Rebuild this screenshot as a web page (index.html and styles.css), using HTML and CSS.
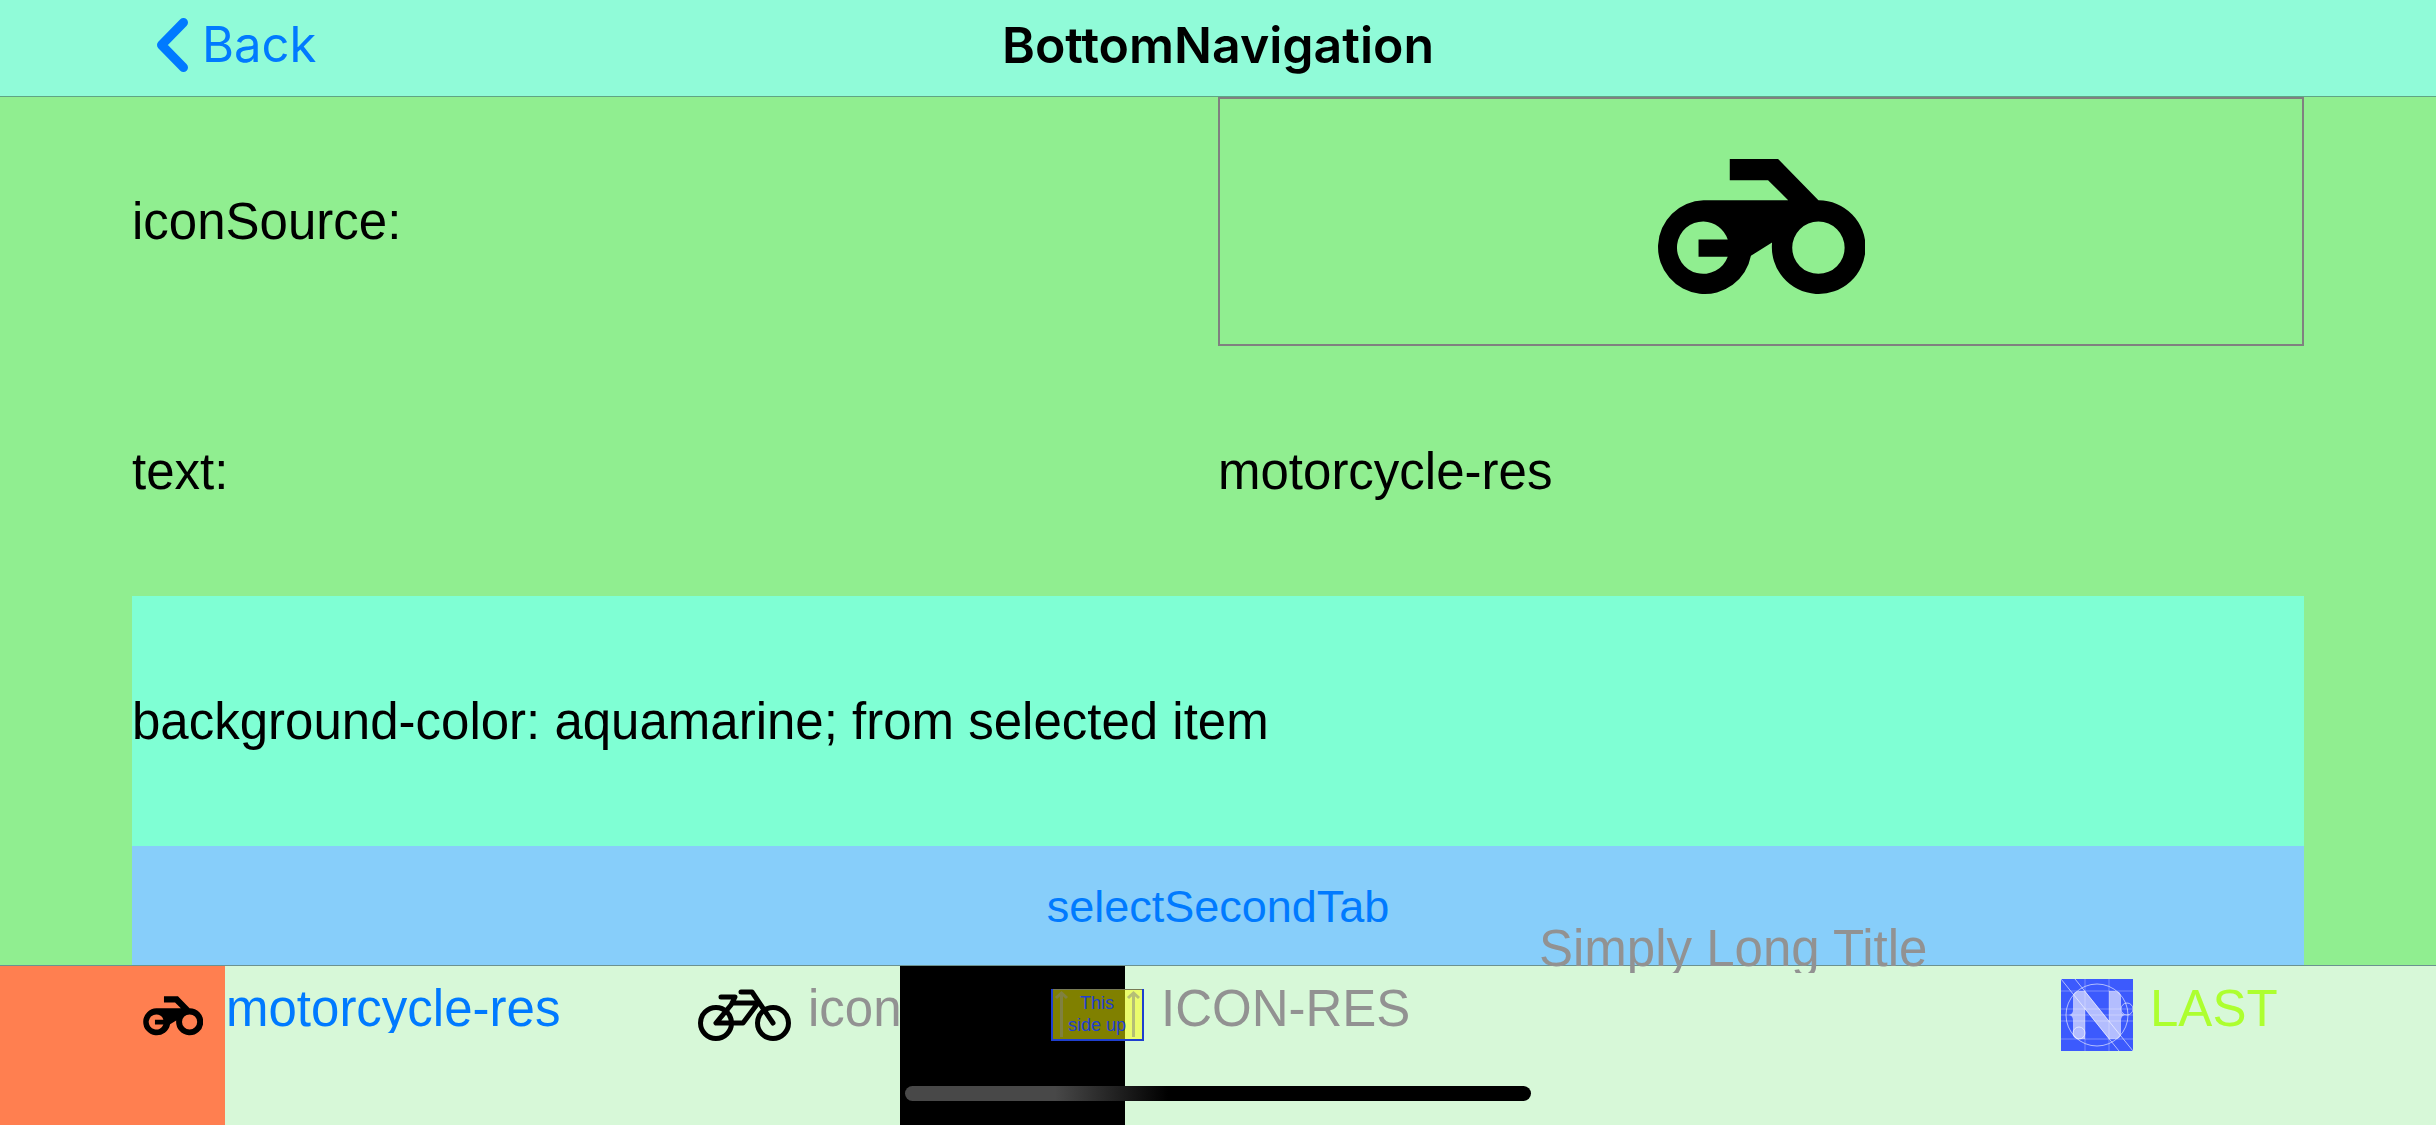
FILE: index.html
```html
<!DOCTYPE html>
<html lang="en">
<head>
<meta charset="utf-8">
<title>BottomNavigation</title>
<link rel="stylesheet" href="styles.css">
</head>
<body>
<header class="action-bar">
  <a class="back" href="#">
    <svg class="chevron" viewBox="0 0 32 54" aria-hidden="true"><path d="M27.5 4.500 5.500 27l22 22.500"/></svg>
    <span>Back</span>
  </a>
  <h1 class="title">BottomNavigation</h1>
</header>

<main class="content">
  <div class="row row-icon">
    <span>iconSource:</span>
    <div class="preview">
      <svg class="preview-icon" viewBox="0 0 206 135" role="img" aria-label="motorcycle"><use href="#moto"/></svg>
    </div>
  </div>
  <div class="row">
    <span>text:</span>
    <span>motorcycle-res</span>
  </div>
  <p class="row selected-color">background-color: aquamarine; from selected item</p>
  <button class="select-tab" type="button">selectSecondTab</button>
</main>

<nav class="tabs">
  <button class="tab tab-moto" type="button">
    <svg class="icon icon-moto" viewBox="0 0 206 135" aria-hidden="true">
      <g id="moto">
        <path fill-rule="evenodd" d="M72 0H120L160 41A46.500 46.500 0 1 1 114 83L93 96A46.500 46.500 0 1 1 46 41H130L110 21H72ZM46 62A26 26 0 1 0 70 97H41V80H70A26 26 0 0 0 46 62ZM160 62A26 26 0 1 0 160 114A26 26 0 1 0 160 62Z"/>
      </g>
    </svg>
    <span class="label">motorcycle-res</span>
  </button>
  <button class="tab tab-icon" type="button">
    <svg class="icon icon-bike" viewBox="0 0 93 52" aria-hidden="true">
      <g fill="none" stroke="#000" stroke-width="5" stroke-linecap="round" stroke-linejoin="round">
        <circle cx="18" cy="34" r="15.500"/><circle cx="75" cy="34" r="15.500"/>
        <path d="M23 8H37L33 16 18 34H45L60 14H34M43 3H54L75 34"/>
      </g>
    </svg>
    <span class="label">icon</span>
  </button>
  <button class="tab tab-sign" type="button">
    <svg class="icon icon-sign" viewBox="0 0 93 52" aria-hidden="true">
      <rect width="93" height="52" fill="#ff0" fill-opacity=".5"/>
      <path d="M0 .5H93" stroke="#777a55"/>
      <path d="M1 0V51H92V0" fill="none" stroke="#1f3fd0" stroke-width="2"/>
      <path d="M10.500 48V4M5 9l5.500-5 5.500 5M82.500 48V4M77 9l5.500-5 5.500 5" fill="none" stroke="#808080" stroke-opacity=".5" stroke-width="3"/>
      <g class="sign-text"><text x="46" y="20">This</text><text x="46" y="42">side up</text></g>
    </svg>
    <span class="label">ICON-RES</span>
  </button>
  <button class="tab tab-long" type="button"><span class="label">Simply Long Title</span></button>
  <button class="tab tab-last" type="button">
    <svg class="icon icon-n" viewBox="0 0 72 72" aria-hidden="true">
      <rect width="72" height="72" fill="#3c5afd"/>
      <path d="M12 18Q12 12 18 12H24L48 42V12H54Q60 12 60 18V31Q60 35 64 36Q60 37 60 41V54Q60 60 54 60H48L24 30V60H18Q12 60 12 54V41Q12 37 8 36Q12 35 12 31Z" fill="#b3bdfe"/>
      <g fill="none" stroke="#fff" stroke-opacity=".3">
        <path d="M0 12H72M0 60H72M0 30H72M0 36H72M0 42H72M24 0V72M48 0V72"/>
      </g>
      <g fill="none" stroke="#fff" stroke-opacity=".6"><path d="M0 0 58 72M14 0 72 72"/><circle cx="36" cy="36" r="31"/><circle cx="18" cy="54" r="6"/><circle cx="66" cy="30" r="6"/></g>
    </svg>
    <span class="label">LAST</span>
  </button>
  <div class="home-indicator"></div>
</nav>
</body>
</html>
```
FILE: styles.css
```css
* { box-sizing: border-box; }

body {
  margin: 0;
  height: 100vh;
  display: flex;
  flex-direction: column;
  background: lightgreen;
  color: #000;
  font: 51px/58px "Liberation Sans", Arial, sans-serif;
}

button {
  border: 0;
  padding: 0;
  background: none;
  font: inherit;
  color: inherit;
}

.action-bar {
  flex: none;
  height: 97px;
  display: grid;
  grid-template-columns: 1fr auto 1fr;
  align-items: center;
  padding: 0 156px 6px;
  background: #90fbd8;
  border-bottom: 1px solid #5fa585;
  font-family: Inter, sans-serif;
}

.back {
  display: flex;
  align-items: center;
  gap: 14px;
  color: #007aff;
  text-decoration: none;
  font-size: 49px;
}

.chevron {
  width: 32px;
  height: 54px;
  fill: none;
  stroke: currentColor;
  stroke-width: 9px;
  stroke-linecap: round;
  stroke-linejoin: round;
}

.title {
  margin: 0;
  font-size: 50px;
  font-weight: 600;
}

.content {
  flex: 1;
  min-height: 0;
  display: flex;
  flex-direction: column;
  padding: 0 132px;
}

.row {
  flex: none;
  height: 250px;
  margin: 0;
  padding-top: 2px;
  display: grid;
  grid-template-columns: 1fr 1fr;
  align-items: center;
}

.row-icon {
  height: 249px;
  padding-top: 0;
}

.preview {
  height: 100%;
  display: flex;
  align-items: center;
  justify-content: center;
  border: 2px solid #808080;
  padding-top: 10px;
}

.preview-icon {
  width: 208px;
  height: 136px;
}

.selected-color {
  grid-template-columns: 1fr;
  background: aquamarine;
}

.select-tab {
  flex: 1;
  padding-top: 3px;
  background: lightskyblue;
  color: #007aff;
  font-size: 45px;
}

.tabs {
  flex: none;
  position: relative;
  height: 160px;
  display: grid;
  grid-template-columns: 560fr 340fr 600fr 423fr 513fr;
  background: #d7f8d8;
  border-top: 1px solid #6b9290;
  color: #929292;
}

.tab {
  min-width: 0;
  display: flex;
  align-items: flex-start;
  gap: 17px;
  padding: 13px 0 0 138px;
  text-align: left;
  white-space: nowrap;
  background-repeat: no-repeat;
  background-size: 225px 100%;
}

.label {
  height: 48px;
  margin-top: 6px;
  line-height: 48px;
  overflow: hidden;
}

.icon {
  flex: none;
  height: 72px;
}

.tab-moto {
  padding-left: 137px;
  color: #007aff;
  background-image: linear-gradient(coral, coral);
}

.icon-moto {
  width: 72px;
  padding: 2px 6px 0;
  color: #000;
}

.icon-bike,
.icon-sign { width: 93px; }

.tab-icon { overflow: hidden; }

.tab-sign {
  padding-left: 151px;
  background-image: linear-gradient(#000, #000);
}

.sign-text {
  font-size: 18px;
  fill: #1f3fd0;
  text-anchor: middle;
}

.tab-long {
  position: relative;
  padding: 0;
}

/* The title has no icon below it, so it rises over the top edge of the bar. */
.tab-long .label {
  position: absolute;
  left: 39px;
  bottom: 152px;
}

.tab-last { color: greenyellow; }

.icon-n { width: 72px; }

.home-indicator {
  position: absolute;
  left: 50%;
  bottom: 24px;
  width: 626px;
  height: 15px;
  border-radius: 8px;
  transform: translateX(-50%);
  background: linear-gradient(90deg, #484848 24%, #000 42%);
}
```
